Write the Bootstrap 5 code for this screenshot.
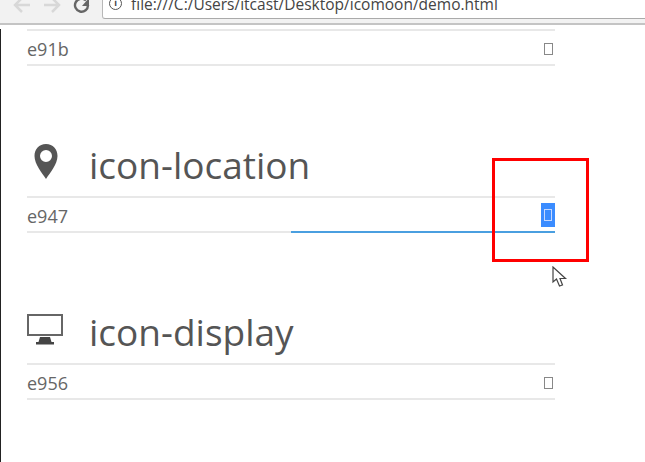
<!DOCTYPE html>
<html lang="en">
<head>
    <meta charset="UTF-8">
    <meta content="width=device-width, initial-scale=1.0" name="viewport">
    <title>IcoMoon Demo</title>
    <link href="https://cdn.jsdelivr.net/npm/bootstrap@5.3.0/dist/css/bootstrap.min.css" rel="stylesheet">
    <style>
        html, body {
            height: 462px;
            overflow: hidden;
        }
        body {
            background: #fff;
            color: #555;
            font-family: "Open Sans", "Noto Sans", sans-serif;
            position: relative;
        }
        .chrome-bar {
            height: 25px;
            background: #f2f2f2;
            border-bottom: 2px solid #c4c4c4;
            padding-left: 12px;
            overflow: hidden;
        }
        .nav-glyph {
            width: 20px;
            height: 18px;
            flex: none;
            margin-right: 10px;
        }
        .addr-box {
            width: 560px;
            height: 19px;
            flex: none;
            background: #fff;
            border-left: 1px solid #b8b8b8;
            border-bottom: 1px solid #aaa;
            border-radius: 0 0 0 3px;
            font-size: 15.500px;
            line-height: 14px;
            color: #444;
            padding-left: 6px;
            gap: 9px;
            white-space: nowrap;
        }
        .info-dot {
            width: 13px;
            height: 13px;
            margin-top: -3px;
            border: 1.500px solid #555;
            border-radius: 50%;
            font-size: 9px;
            line-height: 10px;
            text-align: center;
            font-weight: 700;
            flex: none;
        }
        .url-text {
            margin-top: -3px;
        }
        .doc-page {
            height: 437px;
            border-left: 1px solid #222;
            padding-left: 26px;
            width: 555px;
        }
        .code-row {
            height: 37px;
            padding-top: 3px;
            border-top: 2px solid #e8e8e8;
            border-bottom: 2px solid #e8e8e8;
            font-size: 18px;
            color: #666;
            position: relative;
        }
        .code-row.first-row {
            margin-top: 4px;
        }
        .tofu {
            display: block;
            width: 9px;
            height: 12px;
            margin-right: 2px;
            border: 1px solid #888;
        }
        .tofu-sel {
            background: #3b8cff;
            width: 14px;
            height: 24px;
            padding: 6px 3px 5px;
            margin-top: -2px;
        }
        .tofu-sel i {
            display: block;
            width: 8px;
            height: 12px;
            border: 1px solid #c6d8ff;
        }
        .sel-line {
            position: absolute;
            right: 0;
            bottom: -2px;
            width: 264px;
            height: 2px;
            background: #4a9fe0;
        }
        .icon-head {
            height: 130px;
            gap: 25px;
            padding-top: 81px;
            font-size: 37px;
            line-height: 36px;
            color: #555;
            font-weight: 400;
            margin: 0;
        }
        .icon-slot {
            width: 37px;
            flex: none;
        }
        .pin-glyph {
            margin-top: -3px;
        }
        .red-mark {
            position: absolute;
            left: 492px;
            top: 158px;
            width: 97px;
            height: 104px;
            border: 3px solid #f00;
        }
        .mouse-arrow {
            position: absolute;
            left: 552px;
            top: 266px;
        }
    </style>
</head>
<body>
    <div class="chrome-bar d-flex align-items-start">
        <svg class="nav-glyph" viewBox="0 0 20 18"><path d="M18 5H5M10-2 3 5l7 7" fill="none" stroke="#d8d8d8" stroke-width="2.500"/></svg>
        <svg class="nav-glyph" viewBox="0 0 20 18"><path d="M2 5h13M10-2l7 7-7 7" fill="none" stroke="#d8d8d8" stroke-width="2.500"/></svg>
        <svg class="nav-glyph" viewBox="0 0 20 18"><path d="M16 5a6.500 6.500 0 1 1-2-4.500" fill="none" stroke="#666" stroke-width="2.400"/><path d="M17-2v8H10z" fill="#666"/></svg>
        <div class="addr-box d-flex">
            <span class="info-dot">i</span>
            <span class="url-text">file:///C:/Users/itcast/Desktop/icomoon/demo.html</span>
        </div>
    </div>

    <div class="doc-page">
        <div class="code-row first-row d-flex justify-content-between align-items-center">
            <span>e91b</span>
            <span class="tofu"></span>
        </div>

        <h1 class="icon-head d-flex align-items-start">
            <span class="icon-slot d-flex justify-content-center">
                <svg class="pin-glyph" width="24" height="35" viewBox="0 0 24 35"><path fill-rule="evenodd" d="M12 0C5 0 .5 5 .5 12 .5 20 8 29 12 35 16 29 23.500 20 23.500 12 23.500 5 19 0 12 0ZM12 6a6 6 0 1 1 0 12 6 6 0 0 1 0-12Z" fill="#555"/></svg>
            </span>
            <span>icon-location</span>
        </h1>
        <div class="code-row d-flex justify-content-between align-items-center">
            <span>e947</span>
            <span class="tofu-sel"><i></i></span>
            <div class="sel-line"></div>
        </div>

        <h1 class="icon-head d-flex align-items-start">
            <span class="icon-slot d-flex">
                <svg width="36" height="31" viewBox="0 0 36 31"><path fill-rule="evenodd" d="M0 0H36V22H0ZM2 2V20H34V2Z" fill="#666"/><path d="M13 23h10l1.500 5H27v2.500H9V28h2.500z" fill="#444"/></svg>
            </span>
            <span>icon-display</span>
        </h1>
        <div class="code-row d-flex justify-content-between align-items-center">
            <span>e956</span>
            <span class="tofu"></span>
        </div>
    </div>

    <div class="red-mark"></div>
    <svg class="mouse-arrow" width="16" height="22" viewBox="0 0 16 22"><path d="M1 1V16L4.500 13 7.500 20 10.500 19 8 12.500H13.500Z" fill="#fff" stroke="#444" stroke-width="1.200"/></svg>

    <script src="https://cdn.jsdelivr.net/npm/bootstrap@5.3.0/dist/js/bootstrap.bundle.min.js"></script>
</body>
</html>
